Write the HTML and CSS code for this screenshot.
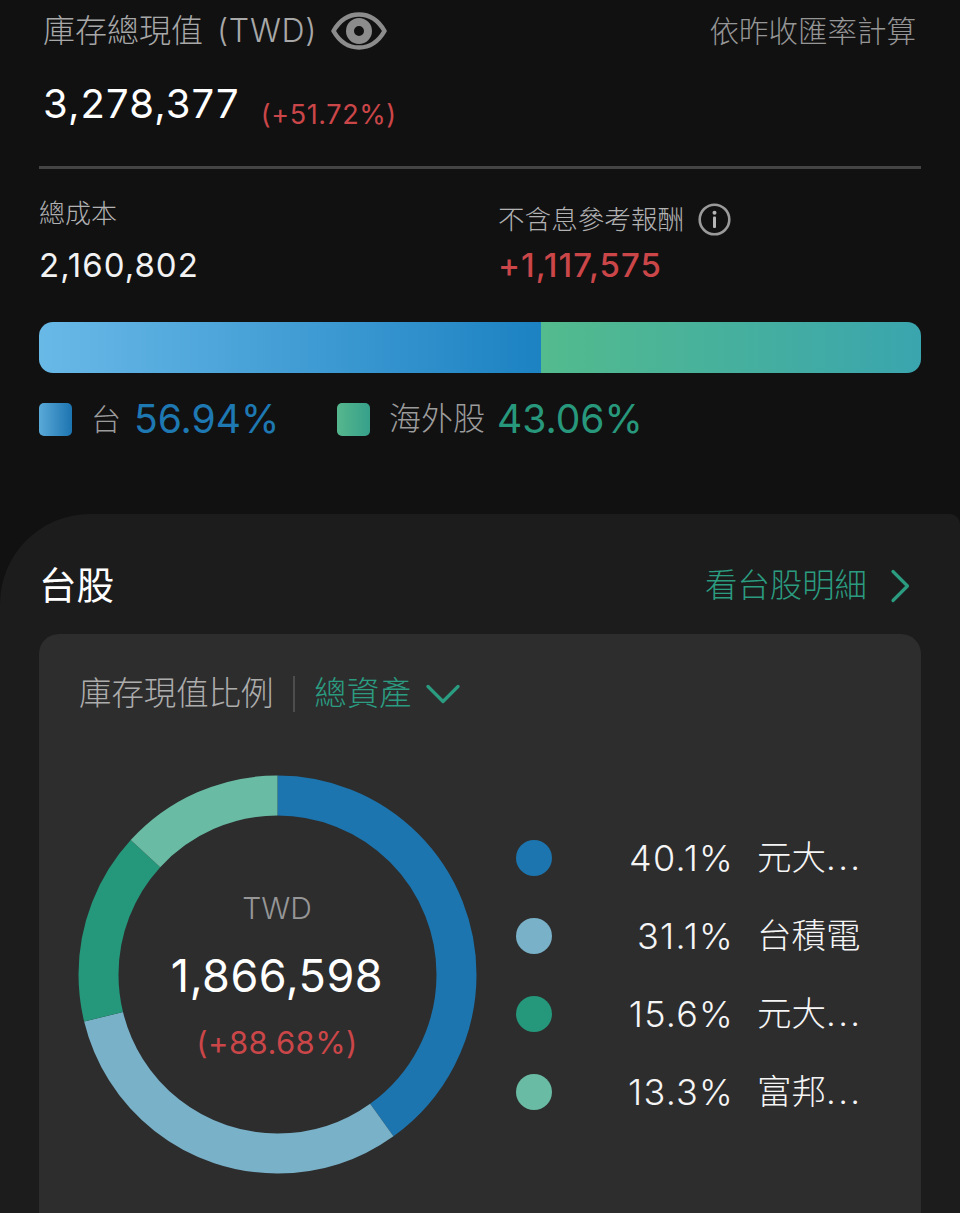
FILE: index.html
```html
<!DOCTYPE html>
<html lang="zh-Hant">
<head>
<meta charset="utf-8">
<title>庫存總現值</title>
<link rel="stylesheet" href="styles.css">
</head>
<body>
<main class="page">
  <section class="summary">
    <div class="title-row">
      <div class="title-left">
        <span class="title">庫存總現值 <span class="title-cur">(TWD)</span></span>
        <svg class="eye" viewBox="0 0 56 38" aria-hidden="true">
          <path d="M2.500 19C8.500 8.500 17.500 2.500 28 2.500S47.500 8.500 53.500 19C47.500 29.500 38.500 35.500 28 35.500S8.500 29.500 2.500 19Z" fill="none" stroke="#8c8c8c" stroke-width="4.500" stroke-linejoin="round"/>
          <circle cx="28" cy="19" r="9" fill="none" stroke="#8c8c8c" stroke-width="8"/>
        </svg>
      </div>
      <span class="rate-note">依昨收匯率計算</span>
    </div>
    <div class="value-row">
      <span class="value">3,278,377</span>
      <span class="value-pct">(+51.72%)</span>
    </div>
    <div class="rule"></div>
    <div class="stats">
      <div class="stat stat-cost">
        <div class="stat-label">總成本</div>
        <div class="stat-num">2,160,802</div>
      </div>
      <div class="stat stat-return">
        <div class="stat-label stat-label-info">
          <span>不含息參考報酬</span>
          <svg class="info" viewBox="0 0 33 33" aria-hidden="true">
            <circle cx="16.500" cy="16.500" r="14.800" fill="none" stroke="#9a9a9a" stroke-width="2.600"/>
            <circle cx="16.500" cy="9.800" r="2" fill="#b5b5b5"/>
            <rect x="15" y="13.500" width="3" height="11.500" rx="1" fill="#b5b5b5"/>
          </svg>
        </div>
        <div class="stat-num stat-num-red">+1,117,575</div>
      </div>
    </div>
    <div class="alloc-bar">
      <div class="alloc-tw"></div>
      <div class="alloc-intl"></div>
    </div>
    <div class="alloc-legend">
      <div class="alloc-item alloc-item-tw">
        <span class="swatch swatch-tw"></span>
        <span class="alloc-name alloc-name-tw">台</span>
        <span class="alloc-pct alloc-pct-tw">56.94%</span>
      </div>
      <div class="alloc-item">
        <span class="swatch swatch-intl"></span>
        <span class="alloc-name">海外股</span>
        <span class="alloc-pct alloc-pct-intl">43.06%</span>
      </div>
    </div>
  </section>

  <section class="panel">
    <div class="panel-head">
      <h2 class="panel-title">台股</h2>
      <div class="detail-link">
        <span>看台股明細</span>
        <svg class="chev-right" viewBox="0 0 20 34" aria-hidden="true">
          <path d="M3 2.500L17.500 17L3 31.500" fill="none" stroke="#2b9c80" stroke-width="3.200" stroke-linecap="round" stroke-linejoin="round"/>
        </svg>
      </div>
    </div>
    <div class="card">
      <div class="card-head">
        <span class="card-title">庫存現值比例</span>
        <span class="card-sep"></span>
        <span class="card-filter">總資產</span>
        <svg class="chev-down" viewBox="0 0 34 20" aria-hidden="true">
          <path d="M2 2.500L17 17.500L32 2.500" fill="none" stroke="#2b9c80" stroke-width="3.200" stroke-linecap="round" stroke-linejoin="round"/>
        </svg>
      </div>
      <div class="card-body">
        <div class="donut">
          <svg class="donut-svg" viewBox="0 0 400 400" aria-hidden="true">
            <circle class="arc arc-1" cx="200.500" cy="199.500" r="179" pathLength="100" stroke-dasharray="40.100 59.900" stroke-dashoffset="0"/>
            <circle class="arc arc-2" cx="200.500" cy="199.500" r="179" pathLength="100" stroke-dasharray="31.100 68.900" stroke-dashoffset="-40.100"/>
            <circle class="arc arc-3" cx="200.500" cy="199.500" r="179" pathLength="100" stroke-dasharray="15.600 84.400" stroke-dashoffset="-71.200"/>
            <circle class="arc arc-4" cx="200.500" cy="199.500" r="179" pathLength="100" stroke-dasharray="13.200 86.800" stroke-dashoffset="-86.800"/>
          </svg>
          <div class="donut-center">
            <div class="donut-cur">TWD</div>
            <div class="donut-val">1,866,598</div>
            <div class="donut-pct">(+88.68%)</div>
          </div>
        </div>
        <ul class="holdings">
          <li class="holding"><span class="dot dot-1"></span><span class="h-pct">40.1%</span><span class="h-name">元大<span class="dots">...</span></span></li>
          <li class="holding"><span class="dot dot-2"></span><span class="h-pct">31.1%</span><span class="h-name">台積電</span></li>
          <li class="holding"><span class="dot dot-3"></span><span class="h-pct">15.6%</span><span class="h-name">元大<span class="dots">...</span></span></li>
          <li class="holding"><span class="dot dot-4"></span><span class="h-pct">13.3%</span><span class="h-name">富邦<span class="dots">...</span></span></li>
        </ul>
      </div>
    </div>
  </section>
</main>
</body>
</html>
```

FILE: styles.css
```css
* { box-sizing: border-box; }
html, body { margin: 0; padding: 0; }
body {
  width: 960px;
  height: 1213px;
  overflow: hidden;
  background: #111112;
  color: #fff;
  font-family: Inter, "Noto Sans CJK TC", "Noto Sans", sans-serif;
}
.page { display: flex; flex-direction: column; height: 1213px; }

.summary { height: 514px; padding: 11px 39px 0; flex: none; }
.title-row {
  display: flex;
  justify-content: space-between;
  align-items: center;
  height: 40px;
  padding: 0 5px 0 4px;
}
.title-left { display: flex; align-items: center; gap: 14px; }
.title { font-size: 32px; line-height: 40px; color: #a8a8a8; font-weight: 300; white-space: nowrap; }
.title-cur { letter-spacing: 0.7px; margin-left: 5px; }
.eye { width: 56px; height: 38px; display: block; }
.rate-note { font-size: 29.500px; line-height: 40px; color: #969696; font-weight: 300; white-space: nowrap; }

.value-row { display: flex; align-items: flex-start; gap: 21px; height: 60px; margin-top: 23px; padding-left: 4px; line-height: 60px; }
.value { font-size: 40px; letter-spacing: 1.100px; color: #fff; font-weight: 400; }
.value-pct { font-size: 27px; letter-spacing: 0.6px; color: #cb4648; margin-top: 11px; }

.rule { height: 3px; background: #444445; margin-top: 32px; }

.stats { display: grid; grid-template-columns: 459px 1fr; height: 153px; }
.stat-cost { padding: 28px 0 0; }
.stat-return { padding: 28px 0 0; }
.stat-label { font-size: 26px; line-height: 34px; color: #b2b2b2; font-weight: 300; white-space: nowrap; }
.stat-label-info { display: flex; align-items: center; gap: 14px; font-size: 26.600px; margin-top: 5px; margin-bottom: -5px; }
.info { width: 33px; height: 33px; display: block; }
.stat-num { font-size: 33px; letter-spacing: 1px; line-height: 40px; margin-top: 14px; color: #f2f2f2; white-space: nowrap; }
.stat-num-red { color: #cb4648; font-weight: 500; }

.alloc-bar { display: flex; height: 51px; border-radius: 14px; overflow: hidden; }
.alloc-tw { width: 502px; background: linear-gradient(90deg, #69b9e7, #1c82c2); }
.alloc-intl { flex: 1; background: linear-gradient(90deg, #53bb8d, #3aa5ae); }

.alloc-legend { display: flex; align-items: center; height: 48px; margin-top: 22px; }
.alloc-item { display: flex; align-items: center; }
.alloc-item-tw { width: 298px; }
.swatch { width: 33px; height: 33px; border-radius: 5px; flex: none; margin-right: 19px; }
.swatch-tw { background: linear-gradient(90deg, #5aa9d8, #1c74b0); }
.swatch-intl { background: linear-gradient(90deg, #56b78d, #36a08a); }
.alloc-name { font-size: 32px; line-height: 48px; color: #9c9c9c; font-weight: 300; margin-right: 12px; white-space: nowrap; }
.alloc-name-tw { font-size: 30px; margin-right: 13px; }
.alloc-pct { font-size: 39px; line-height: 48px; font-weight: 400; white-space: nowrap; }
.alloc-pct-tw { color: #1e78b2; }
.alloc-pct-intl { color: #28987c; }

.panel {
  flex: 1;
  min-height: 0;
  background: #1c1c1d;
  border-radius: 90px 10px 0 0;
  padding: 48px 39px 0;
}
.panel-head { display: flex; justify-content: space-between; align-items: center; height: 48px; padding: 0 11px 0 0; }
.panel-title { margin: 0; font-size: 37.500px; line-height: 48px; font-weight: 400; color: #fff; }
.detail-link { display: flex; align-items: center; gap: 23px; font-size: 32.400px; line-height: 48px; color: #2b9c80; font-weight: 300; }
.chev-right { width: 20px; height: 34px; display: block; }

.card {
  margin-top: 24px;
  height: 620px;
  background: #2d2d2e;
  border-radius: 20px;
  padding: 36px 40px 0;
}
.card-head { display: flex; align-items: center; height: 48px; }
.card-title { font-size: 32.400px; line-height: 48px; color: #adadad; font-weight: 300; white-space: nowrap; }
.card-sep { width: 2px; height: 36px; background: #4d4d4e; margin: 0 19px 0 20px; flex: none; }
.card-filter { font-size: 32.400px; line-height: 48px; color: #2b9c80; font-weight: 300; white-space: nowrap; }
.chev-down { width: 34px; height: 20px; display: block; margin-left: 14px; }

.card-body { display: flex; align-items: center; margin-top: 57px; margin-left: -2px; }
.donut { display: grid; width: 400px; height: 400px; flex: none; }
.donut-svg, .donut-center { grid-area: 1 / 1; }
.donut-svg { width: 400px; height: 400px; display: block; }
.arc { fill: none; stroke-width: 40; transform: rotate(-90deg); transform-origin: 200.500px 199.500px; }
.arc-1 { stroke: #1c75ae; }
.arc-2 { stroke: #79b1c8; }
.arc-3 { stroke: #25977a; }
.arc-4 { stroke: #69bba3; }
.donut-center { display: flex; flex-direction: column; align-items: center; text-align: center; padding-top: 115px; }
.donut-cur { font-size: 30px; line-height: 36px; color: #969696; font-weight: 300; }
.donut-val { font-size: 45px; letter-spacing: 0.500px; line-height: 56px; margin-top: 22px; color: #fff; }
.donut-pct { font-size: 31px; letter-spacing: 0.400px; line-height: 36px; margin-top: 21px; color: #cb4648; font-weight: 400; }

.holdings { list-style: none; margin: 0 0 0 39px; padding: 0; display: flex; flex-direction: column; gap: 42px; }
.holding { display: flex; align-items: center; height: 36px; }
.dot { width: 36px; height: 36px; border-radius: 50%; flex: none; }
.dot-1 { background: #1c75ae; }
.dot-2 { background: #79b1c8; }
.dot-3 { background: #25977a; }
.dot-4 { background: #69bba3; }
.h-pct { width: 182px; text-align: right; font-size: 36px; letter-spacing: 1.200px; color: #f5f5f5; font-weight: 300; white-space: nowrap; }
.h-name { margin-left: 23px; margin-bottom: 6px; font-size: 34.500px; color: #f5f5f5; font-weight: 300; white-space: nowrap; }
.dots { letter-spacing: 2.400px; }
```
